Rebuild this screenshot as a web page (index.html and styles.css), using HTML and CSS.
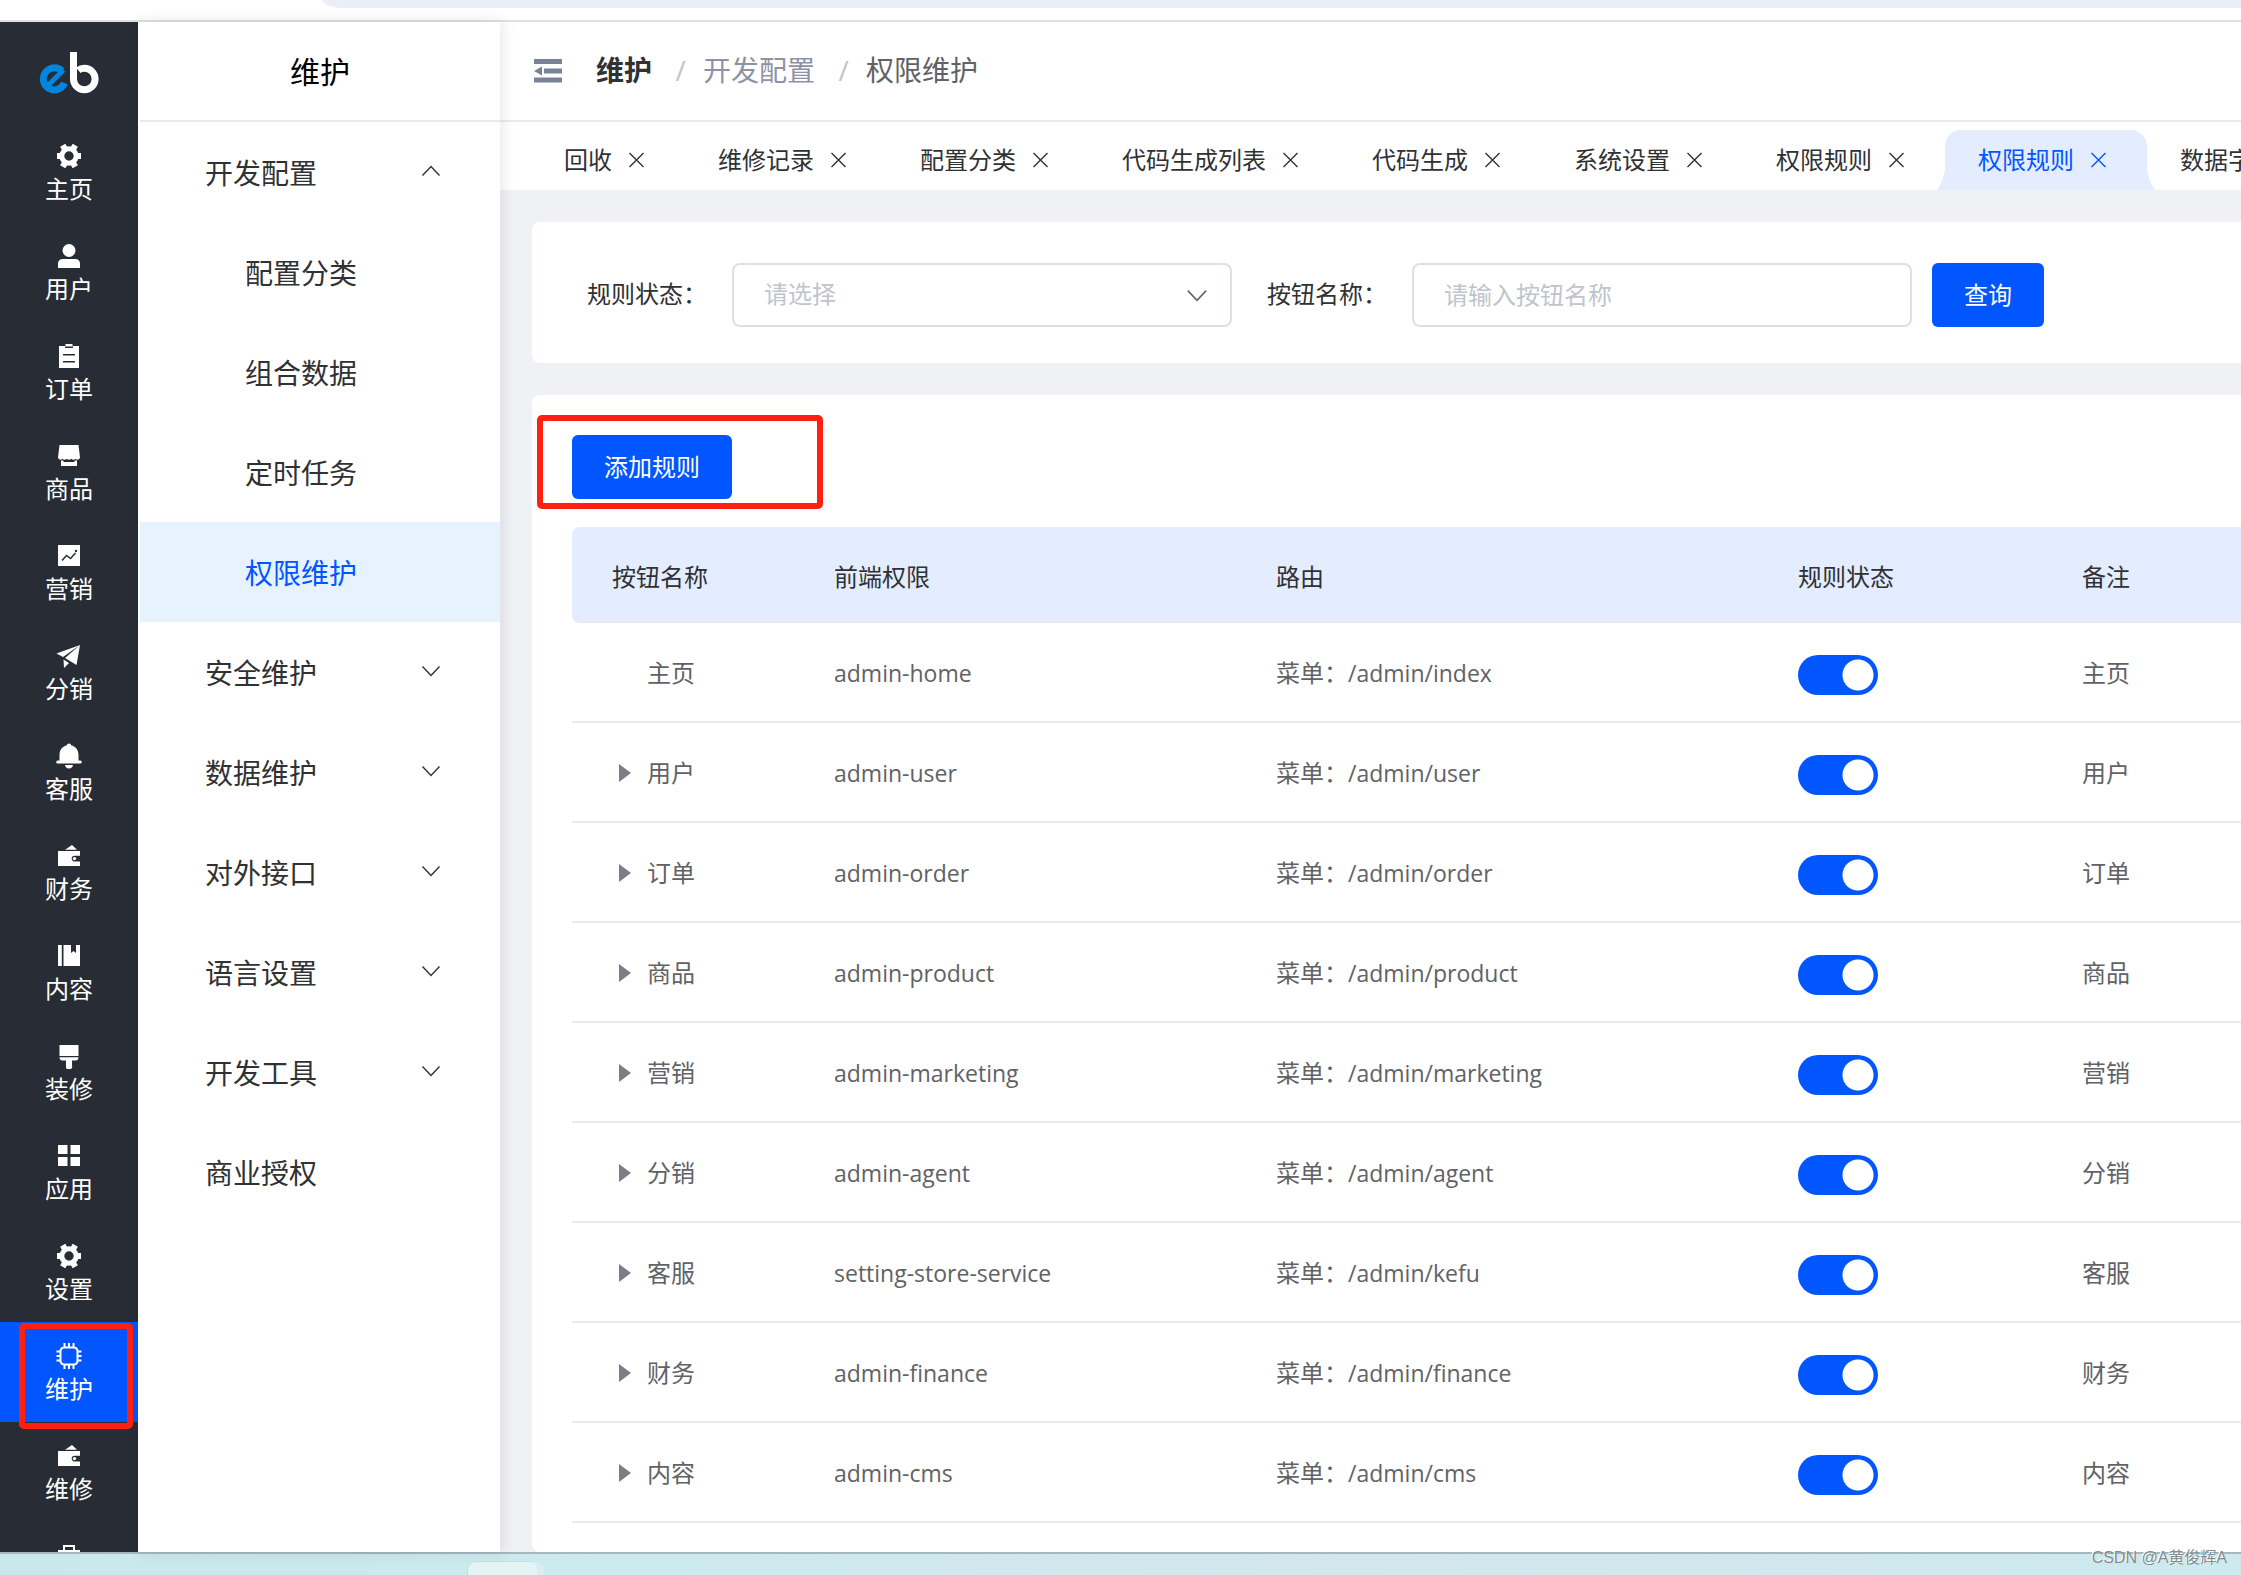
FILE: index.html
```html
<!DOCTYPE html>
<html lang="zh-CN">
<head>
<meta charset="utf-8">
<title>权限维护</title>
<link rel="stylesheet" href="styles.css">
</head>
<body>
<svg class="defs" aria-hidden="true">
  <defs>
    <symbol id="i-gear" viewBox="0 0 26 26"><circle class="ring" cx="13" cy="13" r="7.200"/><path class="teeth" d="M1 13h4M21 13h4"/><path class="teeth" transform="rotate(60 13 13)" d="M.5 13h4M21.500 13h4"/><path class="teeth" transform="rotate(120 13 13)" d="M.5 13h4M21.500 13h4"/></symbol>
    <symbol id="i-user" viewBox="0 0 26 26"><circle cx="13" cy="7.500" r="6.500"/><path d="M2 25v-4.500A4.500 4.500 0 0 1 6.500 16h13a4.500 4.500 0 0 1 4.500 4.500V25z"/></symbol>
    <symbol id="i-order" viewBox="0 0 26 26"><path fill-rule="evenodd" d="M3 3h6.500V1h7v2H23v22H3zM9 3.500V5h8V3.500zM7 11v1.500h12V11zm0 7v1.500h12V18z"/></symbol>
    <symbol id="i-shop" viewBox="0 0 26 26"><path d="M3.500 2h19L24 14.500a2.500 2.500 0 0 1-4.400 1.300 2.800 2.800 0 0 1-4.400 0 2.800 2.800 0 0 1-4.400 0 2.800 2.800 0 0 1-4.400 0A2.500 2.500 0 0 1 2 14.500zM5 17.500h2.500V19h11v-1.500H21V23H5z"/></symbol>
    <symbol id="i-chart" viewBox="0 0 26 26"><path d="M2 2h22v21H2z"/><path class="cut" d="m6 17.500 4.500-5 4 3 5-5.500"/><circle class="hole" cx="20" cy="8" r="1.200"/></symbol>
    <symbol id="i-plane" viewBox="0 0 26 26"><path d="M.5 10.500 24 2 7 14zM24 2l-3.500 20L9 15zM7.500 16.500l5.500 3.400L8 25z"/></symbol>
    <symbol id="i-bell" viewBox="0 0 26 26"><path d="M13 .5c1.300 0 2 .7 2 1.800 4.500 1 7.500 4.700 7.500 9.700v5.500h1.800a1.500 1.500 0 0 1 0 3H1.700a1.500 1.500 0 0 1 0-3h1.800V12c0-5 3-8.700 7.500-9.700 0-1.100.7-1.800 2-1.800zM9 22h8c-.3 2-1.800 3.500-4 3.500S9.300 24 9 22z"/></symbol>
    <symbol id="i-wallet" viewBox="0 0 26 26"><path d="M9 6.800 16 2l5 4.800zM2 8h22v4.800h-5.500a2.800 2.800 0 0 0 0 5.600H24V23H2z"/><circle cx="18.500" cy="15.600" r="1.700"/></symbol>
    <symbol id="i-book" viewBox="0 0 26 26"><path d="M2 2h3.800v21H2zM7.500 2H15v8l2.500-2L20 10V2h4v21H7.500z"/></symbol>
    <symbol id="i-brush" viewBox="0 0 26 26"><path d="M3.500 2h19v11h-19zM3.500 14.200h19c0 2-1 3.300-3 3.300H16v5a3 3 0 0 1-6 2v-7H6.500c-2 0-3-1.300-3-3.300z"/></symbol>
    <symbol id="i-apps" viewBox="0 0 26 26"><path d="M2 2h9.500v9H2zM14.500 2H24v9h-9.500zM2 14h9.500v9H2zM14.500 14H24v9h-9.500z"/></symbol>
    <symbol id="i-chip" viewBox="0 0 26 26"><path class="line" d="M8 4.500h10a4 4 0 0 1 3.500 4v9a4 4 0 0 1-3.500 4H8a4 4 0 0 1-3.500-4v-9A4 4 0 0 1 8 4.500zM8.500 0v4M13 0v4M17.500 0v4M8.500 22v4M13 22v4M17.500 22v4M.5 8.500h4M.5 13h4M.5 17.500h4M21.500 8.500h4M21.500 13h4M21.500 17.500h4"/></symbol>
    <symbol id="i-case" viewBox="0 0 26 26"><path fill-rule="evenodd" d="M7 2h12v5h5v17H2V7h5zM9 4v3h8V4z"/></symbol>
    <symbol id="i-up" viewBox="0 0 20 12"><path class="thin" d="m1.500 10.500 8.500-9 8.500 9"/></symbol>
    <symbol id="i-down" viewBox="0 0 20 12"><path class="thin" d="m1.500 1.500 8.500 9 8.500-9"/></symbol>
    <symbol id="i-close" viewBox="0 0 16 16"><path class="thin" d="m1 1 14 14M15 1 1 15"/></symbol>
  </defs>
</svg>

<div class="browser-edge"><div class="address"></div></div>

<div class="app">
  <nav class="rail" aria-label="主菜单">
    <a class="logo" href="#" aria-label="eb">
      <svg width="60" height="44" viewBox="0 0 60 44"><path class="logo-e" d="M25.500 32A11 11 0 1 1 23 20"/><path class="logo-bar" d="M24.500 19 9 34.500"/><path class="logo-b" d="M34.500 1v27a10.800 10.800 0 1 0 10.800-10.800c-2.500 0-4.500.8-6 2"/></svg>
    </a>
    <a class="rail-item" href="#"><svg><use href="#i-gear"/></svg>主页</a>
    <a class="rail-item" href="#"><svg><use href="#i-user"/></svg>用户</a>
    <a class="rail-item" href="#"><svg><use href="#i-order"/></svg>订单</a>
    <a class="rail-item" href="#"><svg><use href="#i-shop"/></svg>商品</a>
    <a class="rail-item" href="#"><svg><use href="#i-chart"/></svg>营销</a>
    <a class="rail-item" href="#"><svg><use href="#i-plane"/></svg>分销</a>
    <a class="rail-item" href="#"><svg><use href="#i-bell"/></svg>客服</a>
    <a class="rail-item" href="#"><svg><use href="#i-wallet"/></svg>财务</a>
    <a class="rail-item" href="#"><svg><use href="#i-book"/></svg>内容</a>
    <a class="rail-item" href="#"><svg><use href="#i-brush"/></svg>装修</a>
    <a class="rail-item" href="#"><svg><use href="#i-apps"/></svg>应用</a>
    <a class="rail-item" href="#"><svg><use href="#i-gear"/></svg>设置</a>
    <a class="rail-item active" href="#"><svg><use href="#i-chip"/></svg>维护<span class="mark mark-rail"></span></a>
    <a class="rail-item" href="#"><svg><use href="#i-wallet"/></svg>维修</a>
    <a class="rail-item" href="#" aria-label="更多"><svg><use href="#i-case"/></svg></a>
  </nav>

  <aside class="submenu">
    <h2 class="submenu-title">维护</h2>
    <a class="sub-item" href="#">开发配置<svg><use href="#i-up"/></svg></a>
    <a class="sub-item child" href="#">配置分类</a>
    <a class="sub-item child" href="#">组合数据</a>
    <a class="sub-item child" href="#">定时任务</a>
    <a class="sub-item child active" href="#">权限维护</a>
    <a class="sub-item" href="#">安全维护<svg><use href="#i-down"/></svg></a>
    <a class="sub-item" href="#">数据维护<svg><use href="#i-down"/></svg></a>
    <a class="sub-item" href="#">对外接口<svg><use href="#i-down"/></svg></a>
    <a class="sub-item" href="#">语言设置<svg><use href="#i-down"/></svg></a>
    <a class="sub-item" href="#">开发工具<svg><use href="#i-down"/></svg></a>
    <a class="sub-item" href="#">商业授权</a>
  </aside>

  <main class="main">
    <header class="header">
      <button class="fold" type="button" aria-label="收起菜单">
        <svg width="28" height="24" viewBox="0 0 28 24"><path d="M0 0h28v5H0zM10 9.500h18v5H10zM0 18.500h28v5H0zM8 7.500v9L0 12z"/></svg>
      </button>
      <nav class="crumbs" aria-label="面包屑">
        <a class="crumb-root" href="#">维护</a><span class="slash">/</span><a class="crumb-mid" href="#">开发配置</a><span class="slash">/</span><span>权限维护</span>
      </nav>
    </header>

    <div class="tabs">
      <a class="tab" href="#">回收<svg><use href="#i-close"/></svg></a>
      <a class="tab" href="#">维修记录<svg><use href="#i-close"/></svg></a>
      <a class="tab" href="#">配置分类<svg><use href="#i-close"/></svg></a>
      <a class="tab" href="#">代码生成列表<svg><use href="#i-close"/></svg></a>
      <a class="tab" href="#">代码生成<svg><use href="#i-close"/></svg></a>
      <a class="tab" href="#">系统设置<svg><use href="#i-close"/></svg></a>
      <a class="tab" href="#">权限规则<svg><use href="#i-close"/></svg></a>
      <a class="tab active" href="#">权限规则<svg><use href="#i-close"/></svg></a>
      <a class="tab" href="#">数据字典<svg><use href="#i-close"/></svg></a>
    </div>

    <div class="content">
      <form class="card filters">
        <label for="status">规则状态：</label>
        <span class="select-box">
          <select id="status" class="field"><option>请选择</option></select>
          <svg><use href="#i-down"/></svg>
        </span>
        <label for="name">按钮名称：</label>
        <input id="name" class="field" type="text" placeholder="请输入按钮名称">
        <button class="btn" type="button">查询</button>
      </form>

      <section class="card list">
        <div class="toolbar"><button class="btn" type="button">添加规则</button><span class="mark mark-add"></span></div>
        <table class="rules">
          <colgroup><col class="c-name"><col class="c-auth"><col class="c-route"><col class="c-status"><col></colgroup>
          <thead><tr><th>按钮名称</th><th>前端权限</th><th>路由</th><th>规则状态</th><th>备注</th></tr></thead>
          <tbody>
            <tr><td><span class="leaf">主页</span></td><td><span class="code">admin-home</span></td><td>菜单：<span class="code">/admin/index</span></td><td><input class="switch" type="checkbox" checked aria-label="主页"></td><td>主页</td></tr>
            <tr><td><span class="node">用户</span></td><td><span class="code">admin-user</span></td><td>菜单：<span class="code">/admin/user</span></td><td><input class="switch" type="checkbox" checked aria-label="用户"></td><td>用户</td></tr>
            <tr><td><span class="node">订单</span></td><td><span class="code">admin-order</span></td><td>菜单：<span class="code">/admin/order</span></td><td><input class="switch" type="checkbox" checked aria-label="订单"></td><td>订单</td></tr>
            <tr><td><span class="node">商品</span></td><td><span class="code">admin-product</span></td><td>菜单：<span class="code">/admin/product</span></td><td><input class="switch" type="checkbox" checked aria-label="商品"></td><td>商品</td></tr>
            <tr><td><span class="node">营销</span></td><td><span class="code">admin-marketing</span></td><td>菜单：<span class="code">/admin/marketing</span></td><td><input class="switch" type="checkbox" checked aria-label="营销"></td><td>营销</td></tr>
            <tr><td><span class="node">分销</span></td><td><span class="code">admin-agent</span></td><td>菜单：<span class="code">/admin/agent</span></td><td><input class="switch" type="checkbox" checked aria-label="分销"></td><td>分销</td></tr>
            <tr><td><span class="node">客服</span></td><td><span class="code">setting-store-service</span></td><td>菜单：<span class="code">/admin/kefu</span></td><td><input class="switch" type="checkbox" checked aria-label="客服"></td><td>客服</td></tr>
            <tr><td><span class="node">财务</span></td><td><span class="code">admin-finance</span></td><td>菜单：<span class="code">/admin/finance</span></td><td><input class="switch" type="checkbox" checked aria-label="财务"></td><td>财务</td></tr>
            <tr><td><span class="node">内容</span></td><td><span class="code">admin-cms</span></td><td>菜单：<span class="code">/admin/cms</span></td><td><input class="switch" type="checkbox" checked aria-label="内容"></td><td>内容</td></tr>
          </tbody>
        </table>
      </section>
    </div>
  </main>
</div>

<footer class="desktop-edge">
  <div class="window-stub"></div>
  <span class="credit">CSDN @A黄俊辉A</span>
</footer>
</body>
</html>
```

FILE: styles.css
```css
* { box-sizing: border-box; }

body {
  margin: 0;
  height: 100vh;
  display: flex;
  flex-direction: column;
  overflow: hidden;
  background: #fff;
  color: #303133;
  font: 24px/32px "Open Sans", "Noto Sans CJK SC", sans-serif;
}

a { color: inherit; text-decoration: none; }
button, input, select { font: inherit; }
svg { fill: currentColor; flex: none; }
.defs { position: absolute; width: 0; height: 0; }
.thin { fill: none; stroke: currentColor; stroke-width: 1.4; }
.line { fill: none; stroke: currentColor; stroke-width: 2; }
.ring { fill: none; stroke: currentColor; stroke-width: 5; }
.teeth { fill: none; stroke: currentColor; stroke-width: 6; }
.cut { fill: none; stroke: #282c34; stroke-width: 1.5; }
.hole { fill: #282c34; }

/* Strip of the browser chrome above the page */
.browser-edge {
  flex: none;
  height: 22px;
  padding-left: 322px;
  border-bottom: 2px solid #e0e0e0;
}
.address { height: 8px; background: #ebeef7; border-bottom-left-radius: 24px 8px; }

.app { flex: 1; min-height: 0; display: flex; }

/* Dark icon rail */
.rail {
  flex: none;
  width: 138px;
  overflow: hidden;
  background: #282c34;
  color: #fff;
}
.logo { display: flex; height: 100px; padding: 29px 0 0 39px; }
.logo-e, .logo-bar, .logo-b { fill: none; stroke-width: 7; }
.logo-e, .logo-bar { stroke: #0086e0; }
.logo-bar { stroke-width: 5; }
.logo-b { stroke: #fff; }
.rail-item {
  position: relative;
  display: flex;
  flex-direction: column;
  align-items: center;
  gap: 4px;
  height: 100px;
  padding-top: 21px;
}
.rail-item svg { width: 26px; height: 26px; }
.rail-item.active { background: #0256ff; }

/* Red marker frames */
.mark { position: absolute; border: 6px solid #ff2012; border-radius: 5px; pointer-events: none; }
.mark-rail { left: 19px; top: 1px; width: 114px; height: 106px; z-index: 2; }
.mark-add { left: -35px; top: -20px; width: 286px; height: 94px; }

/* Second level menu */
.submenu {
  position: relative;
  z-index: 1;
  flex: none;
  width: 362px;
  padding-left: 2px;
  background: #fff;
  box-shadow: 2px 0 14px rgba(0, 21, 41, 0.1);
}
.submenu-title {
  margin: 0;
  height: 100px;
  border-bottom: 2px solid #e8ebf2;
  color: #000;
  font-size: 30px;
  font-weight: 400;
  line-height: 100px;
  text-align: center;
}
.sub-item {
  display: flex;
  align-items: center;
  justify-content: space-between;
  height: 100px;
  padding: 2px 59px 0 65px;
  font-size: 28px;
}
.sub-item svg { width: 20px; height: 12px; margin-bottom: 5px; }
.sub-item.child { padding-left: 105px; }
.sub-item.active { background: #e6f3ff; color: #0256ff; }

.main { flex: 1; min-width: 0; display: flex; flex-direction: column; }

.header {
  flex: none;
  display: flex;
  align-items: center;
  gap: 34px;
  height: 100px;
  padding-left: 34px;
  border-bottom: 2px solid #e8ebf2;
}
.fold { display: flex; padding: 0; border: 0; background: none; color: #7a8296; }
.crumbs { display: flex; padding-bottom: 2px; color: #606266; font-size: 28px; }
.crumb-root { color: #303133; font-weight: 700; }
.crumb-mid { color: #8c93a6; }
.slash { width: 51px; padding-left: 6px; color: #c0c4cc; text-align: center; }

.tabs {
  flex: none;
  display: flex;
  align-items: flex-end;
  height: 68px;
  padding-left: 31px;
  overflow: hidden;
}
.tab {
  position: relative;
  flex: none;
  display: flex;
  align-items: center;
  gap: 16px;
  height: 60px;
  padding: 0 40px 0 33px;
}
.tab svg { width: 17px; height: 16px; }
.tab.active { background: #e3edff; border-radius: 16px 16px 0 0; color: #0256ff; }
.tab.active::before, .tab.active::after {
  content: "";
  position: absolute;
  bottom: 0;
  width: 8px;
  height: 20px;
  background: #e3edff;
}
.tab.active::before { right: 100%; clip-path: polygon(100% 0, 100% 100%, 0 100%, 60% 60%); }
.tab.active::after { left: 100%; clip-path: polygon(0 0, 0 100%, 100% 100%, 40% 60%); }

.content {
  flex: 1;
  min-height: 0;
  display: flex;
  flex-direction: column;
  gap: 32px;
  padding: 32px 0 0 32px;
  overflow: hidden;
  background: #f0f1f5;
}
.card { background: #fff; border-radius: 8px 0 0 8px; }

.filters {
  flex: none;
  display: flex;
  align-items: center;
  padding: 41px 55px 36px;
}
.filters label { width: 145px; padding-bottom: 2px; white-space: nowrap; }
.field {
  width: 500px;
  height: 64px;
  padding: 0 30px 2px;
  border: 2px solid #dcdfe6;
  border-radius: 8px;
  background: #fff;
  color: #c0c4cc;
  outline: 0;
  appearance: none;
}
.field::placeholder { color: #c0c4cc; opacity: 1; }
.select-box { position: relative; display: flex; margin-right: 35px; }
.select-box svg { position: absolute; right: 24px; top: 26px; width: 22px; height: 13px; color: #606266; }
.btn {
  height: 64px;
  padding: 0 32px;
  border: 0;
  border-radius: 6px;
  background: #0256ff;
  color: #fff;
}
.filters .btn { margin-left: 20px; }

.list { flex: 1 0 auto; padding: 40px 0 0 40px; }
.toolbar { position: relative; display: flex; margin-bottom: 28px; }

.rules { width: 100%; border-collapse: separate; border-spacing: 0; table-layout: fixed; }
.c-name { width: 222px; }
.c-auth { width: 442px; }
.c-route { width: 522px; }
.c-status { width: 284px; }
.rules th, .rules td {
  padding: 2px 0 0 40px;
  border-bottom: 2px solid #e8e9eb;
  font-weight: 400;
  text-align: left;
  white-space: nowrap;
}
.rules th { height: 96px; padding-top: 6px; background: #e3edff; }
.rules th:first-child { border-radius: 8px 0 0 8px; }
.rules td { height: 100px; color: #606266; }
.code { font-size: 23px; }
.leaf, .node { display: flex; align-items: center; padding-left: 35px; }
.node { padding-left: 7px; gap: 16px; }
.node::before {
  content: "";
  border: solid transparent;
  border-width: 9px 0 9px 12px;
  border-left-color: #7a7d85;
}

.switch {
  display: block;
  width: 80px;
  height: 40px;
  margin: 4px 0 0;
  border-radius: 20px;
  background: radial-gradient(circle at 60px 20px, #fff 15px, #0256ff 16px);
  appearance: none;
}

/* Desktop visible under the window */
.desktop-edge {
  position: relative;
  flex: none;
  height: 23px;
  padding: 8px 0 0 468px;
  border-top: 2px solid #a5b8be;
  background: linear-gradient(90deg, #c9e8ec, #cdeaee 30%, #d3e6ec 60%, #cdeaee);
}
.window-stub {
  width: 69px;
  height: 13px;
  border-radius: 8px 8px 0 0;
  background: #e4f4f5;
  box-shadow: 7px 0 0 #d8eef0, 0 0 0 1px #c0dfe3;
}
.credit {
  position: absolute;
  right: 14px;
  bottom: 7px;
  color: #7f8c91;
  font: 16px/20px "Liberation Sans", "Noto Sans CJK SC", sans-serif;
  text-shadow: -1px -1px 0 #fff;
}
```
